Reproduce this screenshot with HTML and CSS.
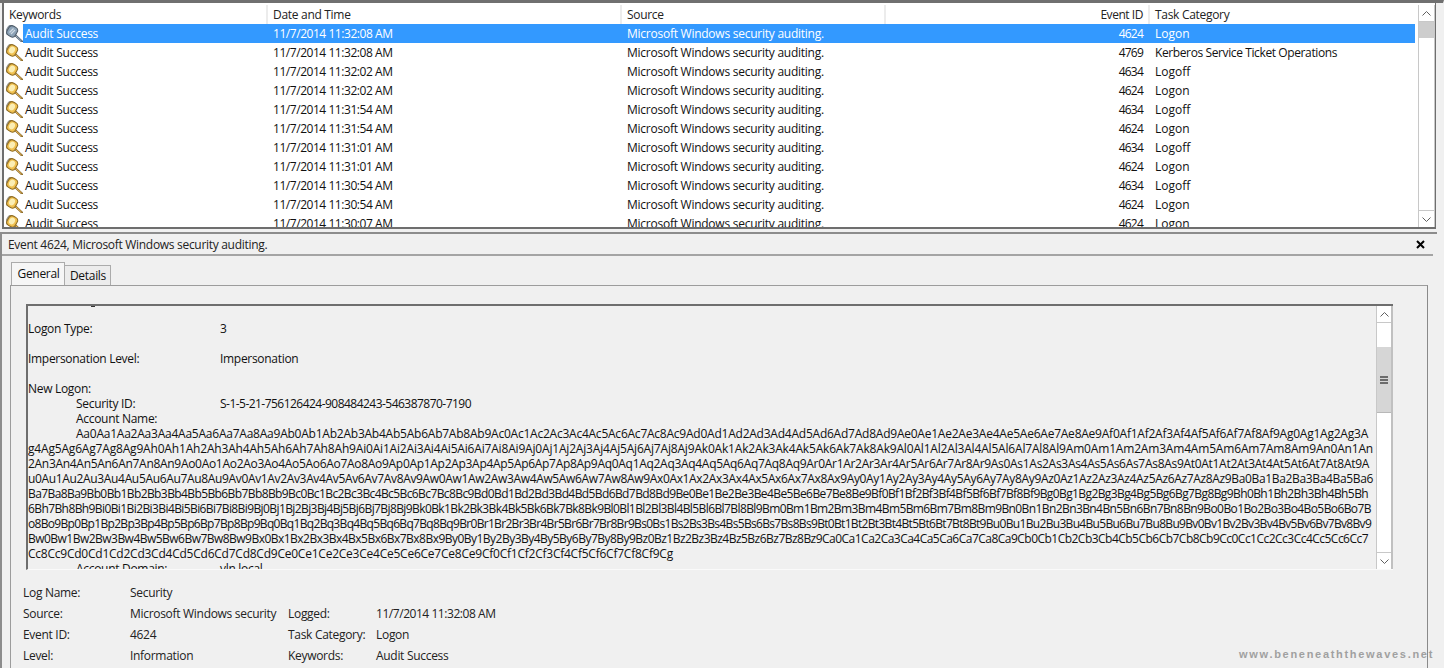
FILE: index.html
```html
<!DOCTYPE html>
<html lang="en">
<head>
    <meta charset="UTF-8">
    <title>Event Viewer</title>
    <link rel="stylesheet" href="styles.css">
</head>
<body>
    <svg class="defs" width="0" height="0">
        <symbol id="key" viewBox="0 0 17 17">
            <path d="M8.5 9.5l7.5 7" stroke="#8a6a2a" stroke-width="2.2" stroke-linecap="round"/>
            <path d="M9 10l6.5 6" stroke="#f0bc5c" stroke-width="1"/>
            <rect x="1.2" y="1" width="9.6" height="10.6" rx="3.6" fill="#9c978a" transform="rotate(30 5 5.5) translate(-1 -.6)"/>
            <rect x="1.5" y="1" width="9.4" height="10.6" rx="3.6" fill="#f0c04f" stroke="#8f6c22" transform="rotate(30 6 6.3)"/>
            <ellipse cx="6" cy="6" rx="2.8" ry="3.6" fill="#fbeeb4" transform="rotate(30 6 6)"/>
        </symbol>
        <symbol id="key-sel" viewBox="0 0 17 17">
            <path d="M8.5 9.5l7.5 7" stroke="#4f5c69" stroke-width="2.2" stroke-linecap="round"/>
            <path d="M9 10l6.5 6" stroke="#a9b9c8" stroke-width="1"/>
            <rect x="1.2" y="1" width="9.6" height="10.6" rx="3.6" fill="#8a95a0" transform="rotate(30 5 5.5) translate(-1 -.6)"/>
            <rect x="1.5" y="1" width="9.4" height="10.6" rx="3.6" fill="#8ca2b6" stroke="#4f5c69" transform="rotate(30 6 6.3)"/>
            <path d="M3.5 7.5l4-4M5 9l4-4" stroke="#cfdbe5" stroke-width="1.2"/>
        </symbol>
    </svg>

    <div class="app">
        <section class="list">
            <div class="list-main">
                <div class="list-head">
                    <div class="hcol hcol-kw">Keywords</div>
                    <div class="hcol hcol-date">Date and Time</div>
                    <div class="hcol hcol-src">Source</div>
                    <div class="hcol hcol-id">Event ID</div>
                    <div class="hcol hcol-task">Task Category</div>
                </div>
                <div class="rows">
                    <div class="row selected"><svg class="key"><use href="#key-sel"/></svg><div class="cells"><span class="c-kw">Audit Success</span><span class="c-date">11/7/2014 11:32:08 AM</span><span class="c-src">Microsoft Windows security auditing.</span><span class="c-id">4624</span><span class="c-task">Logon</span></div></div>
                    <div class="row"><svg class="key"><use href="#key"/></svg><div class="cells"><span class="c-kw">Audit Success</span><span class="c-date">11/7/2014 11:32:08 AM</span><span class="c-src">Microsoft Windows security auditing.</span><span class="c-id">4769</span><span class="c-task c-task-long">Kerberos Service Ticket Operations</span></div></div>
                    <div class="row"><svg class="key"><use href="#key"/></svg><div class="cells"><span class="c-kw">Audit Success</span><span class="c-date">11/7/2014 11:32:02 AM</span><span class="c-src">Microsoft Windows security auditing.</span><span class="c-id">4634</span><span class="c-task">Logoff</span></div></div>
                    <div class="row"><svg class="key"><use href="#key"/></svg><div class="cells"><span class="c-kw">Audit Success</span><span class="c-date">11/7/2014 11:32:02 AM</span><span class="c-src">Microsoft Windows security auditing.</span><span class="c-id">4624</span><span class="c-task">Logon</span></div></div>
                    <div class="row"><svg class="key"><use href="#key"/></svg><div class="cells"><span class="c-kw">Audit Success</span><span class="c-date">11/7/2014 11:31:54 AM</span><span class="c-src">Microsoft Windows security auditing.</span><span class="c-id">4634</span><span class="c-task">Logoff</span></div></div>
                    <div class="row"><svg class="key"><use href="#key"/></svg><div class="cells"><span class="c-kw">Audit Success</span><span class="c-date">11/7/2014 11:31:54 AM</span><span class="c-src">Microsoft Windows security auditing.</span><span class="c-id">4624</span><span class="c-task">Logon</span></div></div>
                    <div class="row"><svg class="key"><use href="#key"/></svg><div class="cells"><span class="c-kw">Audit Success</span><span class="c-date">11/7/2014 11:31:01 AM</span><span class="c-src">Microsoft Windows security auditing.</span><span class="c-id">4634</span><span class="c-task">Logoff</span></div></div>
                    <div class="row"><svg class="key"><use href="#key"/></svg><div class="cells"><span class="c-kw">Audit Success</span><span class="c-date">11/7/2014 11:31:01 AM</span><span class="c-src">Microsoft Windows security auditing.</span><span class="c-id">4624</span><span class="c-task">Logon</span></div></div>
                    <div class="row"><svg class="key"><use href="#key"/></svg><div class="cells"><span class="c-kw">Audit Success</span><span class="c-date">11/7/2014 11:30:54 AM</span><span class="c-src">Microsoft Windows security auditing.</span><span class="c-id">4634</span><span class="c-task">Logoff</span></div></div>
                    <div class="row"><svg class="key"><use href="#key"/></svg><div class="cells"><span class="c-kw">Audit Success</span><span class="c-date">11/7/2014 11:30:54 AM</span><span class="c-src">Microsoft Windows security auditing.</span><span class="c-id">4624</span><span class="c-task">Logon</span></div></div>
                    <div class="row"><svg class="key"><use href="#key"/></svg><div class="cells"><span class="c-kw">Audit Success</span><span class="c-date">11/7/2014 11:30:07 AM</span><span class="c-src">Microsoft Windows security auditing.</span><span class="c-id">4624</span><span class="c-task">Logon</span></div></div>
                </div>
            </div>
            <div class="scrollbar">
                <div class="sb-btn"><svg width="9" height="5" viewBox="0 0 9 5"><path d="M.5 4.5l4-4 4 4" fill="none" stroke="#606060"/></svg></div>
                <div class="sb-thumb sb-thumb-list"></div>
                <div class="sb-track"></div>
                <div class="sb-btn"><svg width="9" height="5" viewBox="0 0 9 5"><path d="M.5 .5l4 4 4-4" fill="none" stroke="#606060"/></svg></div>
            </div>
        </section>

        <section class="detail">
            <div class="detail-title">
                <span>Event 4624, Microsoft Windows security auditing.</span>
                <svg class="close" width="9" height="9" viewBox="0 0 9 9"><path d="M1 1l7 7M8 1l-7 7" stroke="#000" stroke-width="2"/></svg>
            </div>
            <div class="tabs">
                <div class="tab tab-active">General</div>
                <div class="tab">Details</div>
            </div>
            <div class="panel">
                <div class="msg">
                    <div class="msg-text">
                        <div class="clip-mark"></div>
                        <div class="field"><span class="lbl">Logon Type:</span><span>3</span></div>
                        <div class="gap"></div>
                        <div class="field"><span class="lbl">Impersonation Level:</span><span>Impersonation</span></div>
                        <div class="gap"></div>
                        <div class="field"><span class="lbl">New Logon:</span></div>
                        <div class="field sub"><span class="lbl">Security ID:</span><span class="sid">S-1-5-21-756126424-908484243-546387870-7190</span></div>
                        <div class="field sub"><span class="lbl">Account Name:</span></div>
                        <div class="blob">
                            <div class="ln-1">Aa0Aa1Aa2Aa3Aa4Aa5Aa6Aa7Aa8Aa9Ab0Ab1Ab2Ab3Ab4Ab5Ab6Ab7Ab8Ab9Ac0Ac1Ac2Ac3Ac4Ac5Ac6Ac7Ac8Ac9Ad0Ad1Ad2Ad3Ad4Ad5Ad6Ad7Ad8Ad9Ae0Ae1Ae2Ae3Ae4Ae5Ae6Ae7Ae8Ae9Af0Af1Af2Af3Af4Af5Af6Af7Af8Af9Ag0Ag1Ag2Ag3A</div>
                            <div class="ln-2">g4Ag5Ag6Ag7Ag8Ag9Ah0Ah1Ah2Ah3Ah4Ah5Ah6Ah7Ah8Ah9Ai0Ai1Ai2Ai3Ai4Ai5Ai6Ai7Ai8Ai9Aj0Aj1Aj2Aj3Aj4Aj5Aj6Aj7Aj8Aj9Ak0Ak1Ak2Ak3Ak4Ak5Ak6Ak7Ak8Ak9Al0Al1Al2Al3Al4Al5Al6Al7Al8Al9Am0Am1Am2Am3Am4Am5Am6Am7Am8Am9An0An1An</div>
                            <div class="ln-3">2An3An4An5An6An7An8An9Ao0Ao1Ao2Ao3Ao4Ao5Ao6Ao7Ao8Ao9Ap0Ap1Ap2Ap3Ap4Ap5Ap6Ap7Ap8Ap9Aq0Aq1Aq2Aq3Aq4Aq5Aq6Aq7Aq8Aq9Ar0Ar1Ar2Ar3Ar4Ar5Ar6Ar7Ar8Ar9As0As1As2As3As4As5As6As7As8As9At0At1At2At3At4At5At6At7At8At9A</div>
                            <div class="ln-4">u0Au1Au2Au3Au4Au5Au6Au7Au8Au9Av0Av1Av2Av3Av4Av5Av6Av7Av8Av9Aw0Aw1Aw2Aw3Aw4Aw5Aw6Aw7Aw8Aw9Ax0Ax1Ax2Ax3Ax4Ax5Ax6Ax7Ax8Ax9Ay0Ay1Ay2Ay3Ay4Ay5Ay6Ay7Ay8Ay9Az0Az1Az2Az3Az4Az5Az6Az7Az8Az9Ba0Ba1Ba2Ba3Ba4Ba5Ba6</div>
                            <div class="ln-5">Ba7Ba8Ba9Bb0Bb1Bb2Bb3Bb4Bb5Bb6Bb7Bb8Bb9Bc0Bc1Bc2Bc3Bc4Bc5Bc6Bc7Bc8Bc9Bd0Bd1Bd2Bd3Bd4Bd5Bd6Bd7Bd8Bd9Be0Be1Be2Be3Be4Be5Be6Be7Be8Be9Bf0Bf1Bf2Bf3Bf4Bf5Bf6Bf7Bf8Bf9Bg0Bg1Bg2Bg3Bg4Bg5Bg6Bg7Bg8Bg9Bh0Bh1Bh2Bh3Bh4Bh5Bh</div>
                            <div class="ln-6">6Bh7Bh8Bh9Bi0Bi1Bi2Bi3Bi4Bi5Bi6Bi7Bi8Bi9Bj0Bj1Bj2Bj3Bj4Bj5Bj6Bj7Bj8Bj9Bk0Bk1Bk2Bk3Bk4Bk5Bk6Bk7Bk8Bk9Bl0Bl1Bl2Bl3Bl4Bl5Bl6Bl7Bl8Bl9Bm0Bm1Bm2Bm3Bm4Bm5Bm6Bm7Bm8Bm9Bn0Bn1Bn2Bn3Bn4Bn5Bn6Bn7Bn8Bn9Bo0Bo1Bo2Bo3Bo4Bo5Bo6Bo7B</div>
                            <div class="ln-7">o8Bo9Bp0Bp1Bp2Bp3Bp4Bp5Bp6Bp7Bp8Bp9Bq0Bq1Bq2Bq3Bq4Bq5Bq6Bq7Bq8Bq9Br0Br1Br2Br3Br4Br5Br6Br7Br8Br9Bs0Bs1Bs2Bs3Bs4Bs5Bs6Bs7Bs8Bs9Bt0Bt1Bt2Bt3Bt4Bt5Bt6Bt7Bt8Bt9Bu0Bu1Bu2Bu3Bu4Bu5Bu6Bu7Bu8Bu9Bv0Bv1Bv2Bv3Bv4Bv5Bv6Bv7Bv8Bv9</div>
                            <div class="ln-8">Bw0Bw1Bw2Bw3Bw4Bw5Bw6Bw7Bw8Bw9Bx0Bx1Bx2Bx3Bx4Bx5Bx6Bx7Bx8Bx9By0By1By2By3By4By5By6By7By8By9Bz0Bz1Bz2Bz3Bz4Bz5Bz6Bz7Bz8Bz9Ca0Ca1Ca2Ca3Ca4Ca5Ca6Ca7Ca8Ca9Cb0Cb1Cb2Cb3Cb4Cb5Cb6Cb7Cb8Cb9Cc0Cc1Cc2Cc3Cc4Cc5Cc6Cc7</div>
                            <div class="ln-9">Cc8Cc9Cd0Cd1Cd2Cd3Cd4Cd5Cd6Cd7Cd8Cd9Ce0Ce1Ce2Ce3Ce4Ce5Ce6Ce7Ce8Ce9Cf0Cf1Cf2Cf3Cf4Cf5Cf6Cf7Cf8Cf9Cg</div>
                        </div>
                        <div class="field sub"><span class="lbl">Account Domain:</span><span>vln.local</span></div>
                    </div>
                    <div class="scrollbar scrollbar-msg">
                        <div class="sb-btn"><svg width="9" height="5" viewBox="0 0 9 5"><path d="M.5 4.5l4-4 4 4" fill="none" stroke="#606060"/></svg></div>
                        <div class="sb-track sb-track-top"></div>
                        <div class="sb-thumb sb-thumb-msg"><span></span><span></span><span></span></div>
                        <div class="sb-track"></div>
                        <div class="sb-btn"><svg width="9" height="5" viewBox="0 0 9 5"><path d="M.5 .5l4 4 4-4" fill="none" stroke="#606060"/></svg></div>
                    </div>
                </div>
                <div class="info">
                    <span>Log Name:</span><span>Security</span><span></span><span></span>
                    <span>Source:</span><span>Microsoft Windows security</span><span>Logged:</span><span class="info-date">11/7/2014 11:32:08 AM</span>
                    <span>Event ID:</span><span>4624</span><span>Task Category:</span><span>Logon</span>
                    <span>Level:</span><span>Information</span><span>Keywords:</span><span>Audit Success</span>
                </div>
            </div>
        </section>
        <div class="watermark">www.beneneaththewaves.net</div>
    </div>
</body>
</html>
```

FILE: styles.css
```css
* {
    margin: 0;
    padding: 0;
    box-sizing: border-box;
}

body {
    font-family: "Open Sans", "Noto Sans", sans-serif;
    font-size: 12px;
    letter-spacing: -0.3px;
    color: #111;
    background: #f0f0f0;
    overflow: hidden;
}

.defs {
    position: absolute;
}

.app {
    position: relative;
    height: 668px;
    overflow: hidden;
    border-top: 3px solid #707070;
    border-right: 1px solid #f0f0f0;
}

/* event list */
.list {
    display: flex;
    width: 1434px;
    height: 226px;
    margin-left: 2px;
    padding-top: 2px;
    background: #fff;
    border-left: 2px solid #6e6e6e;
    border-bottom: 2px solid #6e6e6e;
    border-right: 1px solid #6e6e6e;
}

.list-main {
    flex: 1;
    min-width: 0;
    overflow: hidden;
}

.list-head {
    display: flex;
    height: 19px;
    line-height: 19px;
    color: #222;
}

.hcol {
    border-right: 2px solid #ececec;
    padding-left: 5px;
}

.hcol-kw { width: 264px; }
.hcol-date { width: 354px; padding-left: 5px; }
.hcol-src { width: 264px; padding-left: 5px; }
.hcol-id { width: 264px; padding: 0 5px 0 0; text-align: right; letter-spacing: -0.45px; }
.hcol-task { flex: 1; padding-left: 5px; border-right: 0; }

.row {
    display: flex;
    height: 19px;
    line-height: 19px;
    white-space: nowrap;
}

.key {
    width: 17px;
    height: 17px;
    margin: 1px 0 0 2px;
    flex: none;
}

.cells {
    display: flex;
    width: 1392px;
    flex: none;
}

.c-kw { width: 244px; padding-left: 2px; letter-spacing: -0.25px; }
.c-date { width: 354px; padding-left: 6px; letter-spacing: -0.45px; }
.c-src { width: 264px; padding-left: 6px; letter-spacing: -0.25px; }
.c-id { width: 264px; padding-right: 6px; text-align: right; letter-spacing: -0.8px; }
.c-task { padding-left: 6px; letter-spacing: 0; }
.c-task-long { letter-spacing: -0.39px; }

.selected .cells {
    background: #3399ff;
    color: #fff;
}

.rows {
    height: 203px;
    overflow: hidden;
}

.scrollbar {
    display: flex;
    flex-direction: column;
    width: 17px;
    flex: none;
    background: #fff;
    border-left: 1px solid #c8c8c8;
    border-right: 1px solid #c8c8c8;
}

.list .scrollbar {
    height: 222px;
}

.sb-btn {
    display: flex;
    align-items: center;
    justify-content: center;
    height: 17px;
    flex: none;
    background: #fff;
    border-bottom: 1px solid #c8c8c8;
}

.sb-btn:last-child {
    border-top: 1px solid #c8c8c8;
    border-bottom: 0;
}

.sb-track {
    flex: 1;
}

.sb-track-top {
    flex: 0 0 24px;
}

.sb-thumb {
    flex: none;
    background: #cdcdcd;
}

.sb-thumb-list {
    height: 16px;
}

.sb-thumb-msg {
    display: flex;
    flex-direction: column;
    align-items: center;
    justify-content: center;
    gap: 1px;
    height: 66px;
    background: #d6d6d6;
    border-bottom: 1px solid #b8b8b8;
}

.sb-thumb-msg span {
    width: 8px;
    height: 2px;
    background: #6c6c6c;
}

/* detail pane */
.detail {
    margin: 3px 6px 0 0;
    border-top: 2px solid #8c8c8c;
    border-left: 2px solid #8c8c8c;
}

.detail-title {
    display: flex;
    align-items: center;
    justify-content: space-between;
    height: 20px;
    padding: 0 8px 0 6px;
    margin-right: 4px;
    color: #222;
    border-bottom: 2px solid #a4a4a4;
    box-sizing: content-box;
}

.tabs {
    display: flex;
    align-items: flex-end;
    height: 29px;
    padding-left: 9px;
}

.tab {
    width: 46px;
    height: 20px;
    padding-left: 1px;
    line-height: 19px;
    text-align: center;
    background: #ececec;
    border: 1px solid #ababab;
    border-bottom: 0;
    border-left: 0;
}

.tab-active {
    width: 54px;
    height: 23px;
    line-height: 21px;
    background: #f6f6f6;
    border-left: 1px solid #ababab;
    border-right: 1px solid #ababab;
}

.panel {
    width: 1418px;
    height: 390px;
    margin-left: 8px;
    padding: 18px 0 0 15px;
    border-top: 1px solid #9c9c9c;
    border-left: 1px solid #9c9c9c;
    border-right: 1px solid #8a8a8a;
}

.msg {
    display: flex;
    width: 1367px;
    height: 266px;
    border-top: 2px solid #6e6e6e;
    border-left: 2px solid #6e6e6e;
    border-bottom: 1px solid #fafafa;
}

.msg-text {
    flex: 1;
    min-width: 0;
    overflow: hidden;
    line-height: 15px;
    white-space: nowrap;
    color: #111;
}

.clip-mark {
    width: 4px;
    height: 1px;
    margin: 0 0 14px 63px;
    background: #333;
}

.gap {
    height: 15px;
}

.field {
    display: flex;
    height: 15px;
}

.field .lbl {
    width: 192px;
}

.field.sub {
    padding-left: 48px;
}

.field.sub .lbl {
    width: 144px;
}

.sid {
    letter-spacing: -0.53px;
}

/* each wrapped line of the long account name */
.ln-1 { padding-left: 48px; letter-spacing: -0.234px; }
.ln-2 { letter-spacing: -0.182px; }
.ln-3 { letter-spacing: -0.301px; }
.ln-4 { letter-spacing: -0.345px; }
.ln-5 { letter-spacing: -0.597px; }
.ln-6 { letter-spacing: -0.594px; }
.ln-7 { letter-spacing: -0.675px; }
.ln-8 { letter-spacing: -0.522px; }
.ln-9 { letter-spacing: -0.237px; }

.scrollbar-msg {
    height: 263px;
    margin-left: 1px;
    border-right: 2px solid #c0c0c0;
}

/* summary under the message */
.info {
    display: grid;
    grid-template-columns: 107px 158px 88px 1fr;
    grid-auto-rows: 21px;
    margin: 12px 0 0 -3px;
    line-height: 21px;
    white-space: nowrap;
    color: #222;
}

.info-date {
    letter-spacing: -0.45px;
}

.watermark {
    position: absolute;
    right: 9px;
    bottom: 8px;
    font-family: "Liberation Sans", sans-serif;
    font-size: 11px;
    font-weight: bold;
    letter-spacing: 1.7px;
    color: #a0a0a0;
}
```
